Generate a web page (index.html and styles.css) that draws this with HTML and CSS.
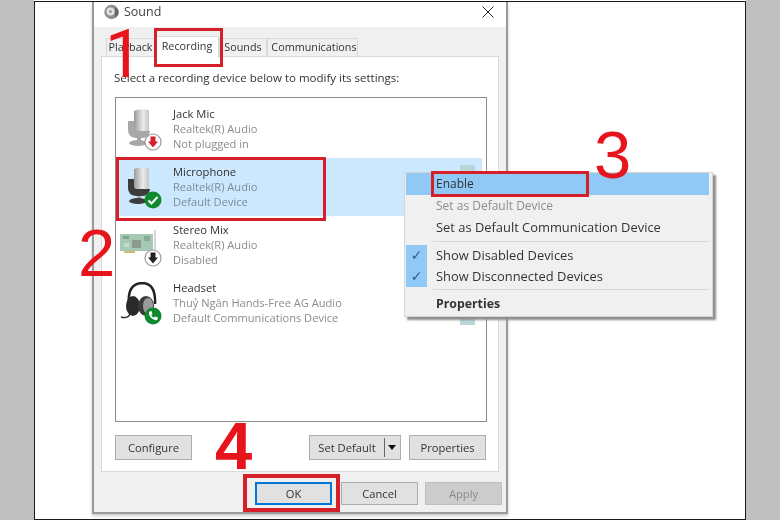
FILE: index.html
```html
<!DOCTYPE html>
<html lang="en">
<head>
    <meta charset="UTF-8">
    <title>Sound</title>
    <link rel="stylesheet" href="styles.css">
</head>
<body>
    <svg class="defs" width="0" height="0">
        <defs>
            <linearGradient id="capsule" x1="0" x2="1" y1="0" y2="0">
                <stop offset="0" stop-color="#9a9a9a"/>
                <stop offset="0.6" stop-color="#ececec"/>
                <stop offset="1" stop-color="#c4c4c4"/>
            </linearGradient>
            <symbol id="mic" viewBox="0 0 24 38">
                <path d="M6 3 q6 -3 15 -1 v21 h-15z" fill="url(#capsule)"/>
                <path d="M0 13 h6 v8 q0 2 4 2 h12 v1 q-2 6 -8 6 h-6 q-8 -1 -8 -8z" fill="currentColor"/>
                <rect x="9" y="30" width="4" height="4" fill="#a5a5a5"/>
                <ellipse cx="10" cy="35" rx="9" ry="3" fill="currentColor"/>
            </symbol>
        </defs>
    </svg>

    <div class="frame">
        <div class="canvas">
            <div class="dialog">
                <div class="titlebar">
                    <svg class="sound-icon" width="16" height="16" viewBox="0 0 16 16">
                        <circle cx="7.500" cy="8" r="7.200" fill="#8f8f8f"/>
                        <circle cx="6.500" cy="7.500" r="4" fill="#e2e2e2"/>
                        <circle cx="6.500" cy="7.500" r="1.500" fill="#9a9a9a"/>
                        <path d="M11 3 l3.500 3 v4 l-3.500 4z" fill="#666"/>
                    </svg>
                    <span class="title">Sound</span>
                    <svg class="close" width="12" height="12" viewBox="0 0 12 12">
                        <path d="M.5 .5 L11.500 11.500 M11.500 .5 L.5 11.500" stroke="#222" stroke-width="1"/>
                    </svg>
                </div>
                <div class="body">
                    <div class="tabs">
                        <div class="tab tab-playback">Playback</div>
                        <div class="tab tab-active">Recording</div>
                        <div class="tab tab-sounds">Sounds</div>
                        <div class="tab tab-comm">Communications</div>
                    </div>
                    <div class="panel">
                        <div class="prompt">Select a recording device below to modify its settings:</div>
                        <div class="list">
                            <div class="row">
                                <div class="device-icon">
                                    <svg class="mic mic-off" width="24" height="38"><use href="#mic"/></svg>
                                    <svg class="badge" width="18" height="18" viewBox="0 0 18 18">
                                        <circle cx="9" cy="9" r="8" fill="#fff" stroke="#9a9a9a" stroke-width="1.200"/>
                                        <path d="M6.500 3.500 h5 v5 h2.500 l-5 6 l-5 -6 h2.500z" fill="#d3202a"/>
                                    </svg>
                                </div>
                                <div class="info">
                                    <div class="name">Jack Mic</div>
                                    <div class="sub">Realtek(R) Audio</div>
                                    <div class="sub">Not plugged in</div>
                                </div>
                            </div>
                            <div class="row row-selected">
                                <div class="device-icon">
                                    <svg class="mic" width="24" height="38"><use href="#mic"/></svg>
                                    <svg class="badge" width="18" height="18" viewBox="0 0 18 18">
                                        <circle cx="9" cy="9" r="8.500" fill="#118a2f"/>
                                        <path d="M4.500 9.500 l3 3 l6 -6.500" fill="none" stroke="#fff" stroke-width="2"/>
                                    </svg>
                                </div>
                                <div class="info">
                                    <div class="name">Microphone</div>
                                    <div class="sub">Realtek(R) Audio</div>
                                    <div class="sub">Default Device</div>
                                </div>
                                <div class="meter meter-top"></div>
                            </div>
                            <div class="row">
                                <div class="device-icon">
                                    <svg class="card" width="38" height="28" viewBox="0 0 38 28">
                                        <path d="M0 4 h33 v17 h-18 v2 h-11 v-2 h-4z" fill="#a6c9b4"/>
                                        <rect x="3" y="6" width="6" height="3" fill="#7ea58e"/>
                                        <rect x="12" y="10" width="9" height="8" fill="#8b9a91"/>
                                        <rect x="24" y="6" width="6" height="5" fill="#86ab95"/>
                                        <rect x="4" y="13" width="5" height="4" fill="#c6dccd"/>
                                        <rect x="5" y="21" width="10" height="2" fill="#d8b968"/>
                                        <path d="M35 0 v24" stroke="#d6d6d6" stroke-width="2"/>
                                    </svg>
                                    <svg class="badge" width="18" height="18" viewBox="0 0 18 18">
                                        <circle cx="9" cy="9" r="8" fill="#fff" stroke="#9a9a9a" stroke-width="1.200"/>
                                        <path d="M6.500 3.500 h5 v5 h2.500 l-5 6 l-5 -6 h2.500z" fill="#222"/>
                                    </svg>
                                </div>
                                <div class="info">
                                    <div class="name">Stereo Mix</div>
                                    <div class="sub">Realtek(R) Audio</div>
                                    <div class="sub">Disabled</div>
                                </div>
                            </div>
                            <div class="row">
                                <div class="device-icon">
                                    <svg class="headset" width="44" height="40" viewBox="0 0 44 40">
                                        <path d="M9 22 q-2 -20 13 -21 q14 0 13 21" fill="none" stroke="#222" stroke-width="2.500"/>
                                        <ellipse cx="13" cy="24" rx="7" ry="10" fill="#2a2a2a"/>
                                        <ellipse cx="26" cy="24" rx="8" ry="10" fill="#3a3a3a"/>
                                        <ellipse cx="28" cy="24" rx="5" ry="8" fill="#9b9b9b"/>
                                        <path d="M10 32 q-2 5 -9 3" fill="none" stroke="#333" stroke-width="1.500"/>
                                    </svg>
                                    <svg class="badge" width="18" height="18" viewBox="0 0 18 18">
                                        <circle cx="9" cy="9" r="8.500" fill="#118a2f"/>
                                        <path d="M5.500 4.500 l2 -.5 l1 3 l-1.200 1 q1 2 2.700 2.700 l1 -1.200 l3 1 l-.5 2 q-1 1 -2.500 .5 q-5 -1.500 -6 -6 q-.2 -1.500 .5 -2.500z" fill="#fff"/>
                                    </svg>
                                </div>
                                <div class="info">
                                    <div class="name">Headset</div>
                                    <div class="sub">Thuỷ Ngân Hands-Free AG Audio</div>
                                    <div class="sub">Default Communications Device</div>
                                </div>
                                <div class="meter meter-bottom"></div>
                            </div>
                        </div>
                        <div class="panel-buttons">
                            <button class="btn">Configure</button>
                            <div class="split">
                                <span class="split-label">Set Default</span>
                                <span class="split-arrow"></span>
                            </div>
                            <button class="btn">Properties</button>
                        </div>
                    </div>
                    <div class="footer">
                        <button class="btn btn-default">OK</button>
                        <button class="btn">Cancel</button>
                        <button class="btn btn-disabled">Apply</button>
                    </div>
                </div>
            </div>
        </div>
    </div>

    <!-- context menu over the list -->
    <div class="menu">
        <div class="menu-item menu-hot">Enable</div>
        <div class="menu-item menu-off">Set as Default Device</div>
        <div class="menu-item">Set as Default Communication Device</div>
        <div class="menu-sep"></div>
        <div class="menu-item menu-check"><span class="tick">✓</span>Show Disabled Devices</div>
        <div class="menu-item menu-check"><span class="tick">✓</span>Show Disconnected Devices</div>
        <div class="menu-sep"></div>
        <div class="menu-item menu-bold">Properties</div>
    </div>

    <!-- red annotations -->
    <div class="mark mark-recording"></div>
    <div class="mark mark-mic"></div>
    <div class="mark mark-enable"></div>
    <div class="mark mark-ok"></div>
    <div class="step step-1">1</div>
    <div class="step step-2">2</div>
    <div class="step step-3">3</div>
    <div class="step step-4">4</div>
</body>
</html>
```

FILE: styles.css
```css
* {
    box-sizing: border-box;
}
body {
    margin: 0;
    width: 780px;
    height: 520px;
    overflow: hidden;
    background-color: #bfbfbf;
    font-family: "Open Sans", "Noto Sans", sans-serif;
    font-size: 11.200px;
    color: #333;
}
.defs {
    display: block;
    height: 0;
}
.frame {
    width: 712px;
    height: 520px;
    margin-left: 34px;
    padding-top: 1px;
    background-color: #fff;
    filter: blur(0.3px); /* the source picture is a soft jpeg */
}
.canvas {
    height: 519px;
    border: 1px solid #1a1a1a;
    padding-left: 57px;
}
.dialog {
    width: 416px;
    height: 512px;
    display: flex;
    flex-direction: column;
    border: 2px solid #9a9a9a;
    border-top: none;
    background-color: #f0f0f0;
    box-shadow: 0 2px 3px rgba(0, 0, 0, 0.2);
}
.titlebar {
    height: 25px;
    flex: none;
    display: flex;
    align-items: center;
    padding: 0 12px 6px 10px;
    background-color: #fff;
}
.title {
    margin-left: 4px;
    font-size: 12.500px;
    color: #444;
}
.close {
    margin-left: auto;
}
.body {
    flex: 1;
    display: flex;
    flex-direction: column;
    padding: 11px 7px 0;
}
.tabs {
    display: flex;
    height: 18px;
    padding-left: 5px;
}
.tab {
    height: 19px;
    line-height: 15px;
    border: 1px solid #d9d9d9;
    border-bottom: none;
    font-size: 10.800px;
    text-align: center;
    white-space: nowrap;
}
.tab-playback {
    width: 49px;
}
.tab-active {
    width: 64px;
    height: 22px;
    margin-top: -2px;
    padding-top: 1px;
    background-color: #fff;
    position: relative;
    z-index: 1;
}
.tab-sounds {
    width: 48px;
}
.tab-comm {
    width: 91px;
    padding-left: 3px;
}
.panel {
    width: 398px;
    height: 416px;
    flex: none;
    padding: 13px 11px 0 13px;
    border: 1px solid #d9d9d9;
    background-color: #fff;
}
.prompt {
    height: 27px;
    margin-left: -1px;
    font-size: 11.500px;
    line-height: 16px;
    white-space: nowrap;
}
.list {
    width: 372px;
    height: 325px;
    padding-top: 2px;
    border: 1px solid #8c8c8c;
    margin-bottom: 13px;
}
.row {
    width: 366px;
    height: 58px;
    display: flex;
    align-items: center;
}
.row-selected {
    background-color: #cce8ff;
}
.device-icon {
    width: 57px;
    height: 58px;
    flex: none;
    position: relative;
}
.mic {
    position: absolute;
    left: 12px;
    top: 8px;
    color: #3c3c3c;
}
.mic-off {
    color: #a8a8a8;
}
.card {
    position: absolute;
    left: 4px;
    top: 14px;
}
.headset {
    position: absolute;
    left: 4px;
    top: 8px;
}
.badge {
    position: absolute;
    left: 28px;
    top: 33px;
}
.info {
    margin-bottom: 2px;
}
.name {
    line-height: 15px;
    font-size: 11.200px;
    color: #333;
}
.sub {
    line-height: 15px;
    font-size: 11.100px;
    color: #8b8b8b;
}
.row-selected .sub {
    color: #7d8b96;
}
.meter {
    width: 15px;
    margin-left: auto;
    margin-right: 7px;
    background-color: #bbd5d8;
}
.meter-top {
    height: 40px;
    margin-bottom: 4px;
}
.meter-bottom {
    height: 44px;
}
.panel-buttons {
    display: flex;
    width: 371px;
    gap: 8px;
}
.btn {
    width: 77px;
    height: 25px;
    padding: 0;
    flex: none;
    border: 1px solid #adadad;
    background-color: #e1e1e1;
    font-family: inherit;
    font-size: 11.200px;
    color: #333;
}
.panel-buttons .btn:first-child {
    margin-right: auto;
}
.split {
    width: 92px;
    height: 25px;
    display: flex;
    align-items: center;
    border: 1px solid #adadad;
    background-color: #e1e1e1;
}
.split-label {
    width: 75px;
    text-align: center;
    border-right: 1px solid #666;
    line-height: 19px;
}
.split-arrow {
    margin-left: 3px;
    border-left: 4.500px solid transparent;
    border-right: 4.500px solid transparent;
    border-top: 5px solid #111;
}
.footer {
    display: flex;
    gap: 7px;
    padding: 10px 0 0 154px;
}
.footer .btn {
    height: 23px;
}
.btn-default {
    border: 2px solid #0078d7;
    margin-right: 2px;
}
.btn-disabled {
    background-color: #cccccc;
    border-color: #bfbfbf;
    color: #8a8a8a;
}
.menu {
    position: absolute;
    left: 404px;
    top: 172px;
    width: 309px;
    height: 145px;
    padding: 0 3px 0 1px;
    border: 1px solid #d5d5d5;
    background-color: #f0f0f0;
    box-shadow: 3px 3px 2px #8d8d8d;
    font-size: 12.900px;
    filter: blur(0.3px);
}
.menu-item {
    height: 22px;
    line-height: 21px;
    padding-left: 30px;
    color: #333;
    white-space: nowrap;
    position: relative;
}
.menu-hot {
    background-color: #90c8f6;
    font-size: 12px;
}
.menu-off {
    color: #8d8d8d;
    font-size: 12px;
}
.menu-check {
    height: 21px;
}
.tick {
    position: absolute;
    left: 0;
    top: 0;
    width: 21px;
    height: 21px;
    background-color: #90c8f6;
    text-align: center;
    font-family: "DejaVu Sans", sans-serif;
    font-size: 14px;
    color: #2b5f8e;
}
.menu-sep {
    height: 1px;
    margin: 2px 0 3px 27px;
    background-color: #d7d7d7;
}
.menu-bold {
    font-weight: 700;
    font-size: 12.300px;
    margin-top: 3px;
}
.mark {
    position: absolute;
    border: 3px solid #d5202a;
}
.mark-recording {
    left: 154px;
    top: 28px;
    width: 69px;
    height: 39px;
}
.mark-mic {
    left: 116px;
    top: 157px;
    width: 210px;
    height: 64px;
}
.mark-enable {
    left: 431px;
    top: 171px;
    width: 158px;
    height: 26px;
}
.mark-ok {
    left: 243px;
    top: 474px;
    width: 97px;
    height: 38px;
    border-width: 4px;
}
.step {
    position: absolute;
    font-family: "Liberation Sans", sans-serif;
    font-size: 67px;
    line-height: 67px;
    color: #e8141c;
}
.step-1 {
    left: 105px;
    top: 21px;
    font-family: Roboto, sans-serif;
}
.step-2 {
    left: 78px;
    top: 219px;
}
.step-3 {
    left: 594px;
    top: 121px;
}
.step-4 {
    left: 215px;
    top: 412px;
    font-weight: 700;
}
```
